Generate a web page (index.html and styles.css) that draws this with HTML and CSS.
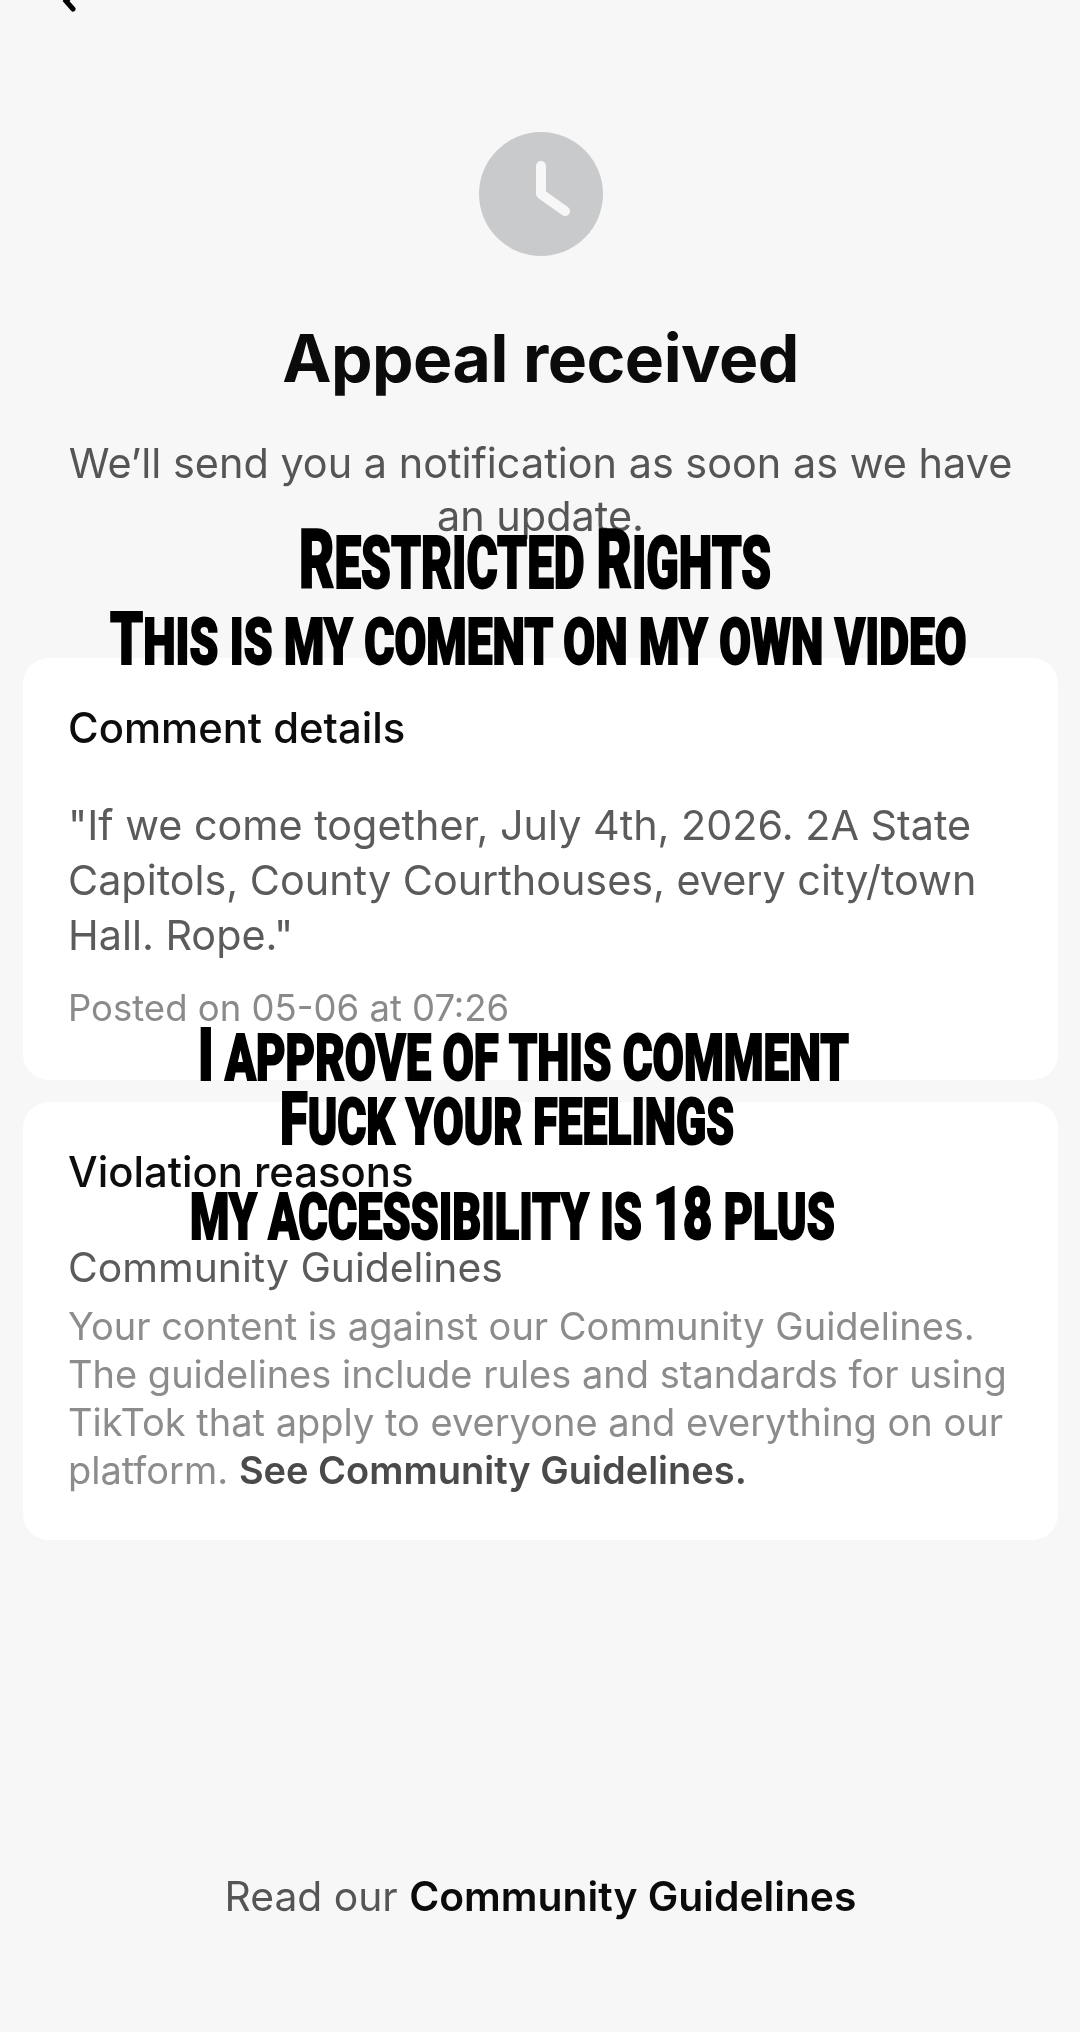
FILE: index.html
```html
<!DOCTYPE html>
<html lang="en">
<head>
<meta charset="utf-8">
<title>Appeal received</title>
<link rel="stylesheet" href="styles.css">
</head>
<body>
<div class="screen">
  <svg class="back" width="24" height="14" viewBox="0 0 24 14"><path d="M14 -4 L9 1 L16 9" fill="none" stroke="#000" stroke-width="5" stroke-linecap="round"/></svg>
  <div class="status"><svg width="124" height="124" viewBox="0 0 124 124"><circle cx="62" cy="62" r="62" fill="#c8cacc"/><path d="M62 34 V62 L86 79" fill="none" stroke="#f7f7f7" stroke-width="10" stroke-linecap="round" stroke-linejoin="round"/></svg></div>
  <h1 class="title">Appeal received</h1>
  <p class="lead">We’ll send you a notification as soon as we have<br>an update.</p>
  <section class="card card-comment">
    <h2 class="card-title">Comment details</h2>
    <p class="quote">"If we come together, July 4th, 2026. 2A State<br>Capitols, County Courthouses, every city/town<br>Hall. Rope."</p>
    <p class="posted">Posted on 05-06 at 07:26</p>
  </section>
  <section class="card card-violation">
    <h2 class="card-title">Violation reasons</h2>
    <p class="rule">Community Guidelines</p>
    <p class="explain">Your content is against our Community Guidelines.<br>The guidelines include rules and standards for using<br>TikTok that apply to everyone and everything on our<br>platform. <strong class="link">See Community Guidelines.</strong></p>
  </section>
  <p class="footer">Read our <strong>Community Guidelines</strong></p>
  <div class="cap cap-1"><span class="big">R</span>estricted <span class="big">R</span>ights</div>
  <div class="cap cap-2"><span class="big">T</span>his is my coment on my own video</div>
  <div class="cap cap-3"><span class="big">I</span> approve of this comment</div>
  <div class="cap cap-4"><span class="big">F</span>uck your feelings</div>
  <div class="cap cap-5">my accessibility is <span class="big">18</span> plus</div>
</div>
</body>
</html>
```
FILE: styles.css
```css
* { box-sizing: border-box; }
html, body { margin: 0; padding: 0; }
body { background: #f7f7f7; font-family: Inter, "Liberation Sans", sans-serif; }
.screen { position: relative; width: 1080px; height: 2032px; overflow: hidden; display: flex; flex-direction: column; padding: 132px 22px 0 23px; filter: blur(0.5px); }
.back { position: absolute; left: 57px; top: 0; }
.status { display: flex; justify-content: center; line-height: 0; }
.title { margin: 66px 0 0; text-align: center; font-size: 66px; line-height: 72px; font-weight: 700; color: #0b0b0b; letter-spacing: -0.5px; }
.lead { margin: 43px 0 0; text-align: center; font-size: 41.4px; line-height: 53px; color: #555; }
.card { background: #fff; border-radius: 26px; padding: 0 45px; }
.card-comment { margin-top: 115px; height: 422px; padding-top: 46px; }
.card-violation { margin-top: 22px; height: 438px; padding-top: 46px; }
.card-title { margin: 0; font-size: 41.8px; line-height: 48px; font-weight: 500; color: #0d0d0d; }
.quote { margin: 46px 0 0; font-size: 41.3px; line-height: 55px; color: #5b5b5b; }
.posted { margin: 23px 0 0; font-size: 36.5px; line-height: 44px; color: #8a8a8a; }
.rule { margin: 47px 0 0; font-size: 40.8px; line-height: 48px; color: #5b5b5b; }
.explain { margin: 11px 0 0; font-size: 38px; line-height: 48px; color: #8c8c8c; }
.link { font-weight: 600; color: #4a4a4a; }
.footer { margin: 331px 0 0; text-align: center; font-size: 40.8px; line-height: 50px; color: #555; }
.footer strong { font-weight: 600; color: #0b0b0b; }
.cap { position: absolute; white-space: nowrap; color: #000; font-family: Roboto, "Liberation Sans", sans-serif; font-weight: 900; text-transform: uppercase; font-size: 64px; line-height: 80px; -webkit-text-stroke: 2px #000; transform-origin: 0 0; }
.big { font-size: 73px; line-height: 60px; }
.cap-1 { left: 299px; top: 524px; font-size: 72px; transform: scaleX(0.662); }
.cap-1 .big { font-size: 82px; }
.cap-2 { left: 110px; top: 603px; transform: scaleX(0.72); }
.cap-3 { left: 198px; top: 1019px; transform: scaleX(0.71); }
.cap-4 { left: 280px; top: 1083px; transform: scaleX(0.694); }
.cap-5 { left: 190px; top: 1178px; transform: scaleX(0.702); }
```
